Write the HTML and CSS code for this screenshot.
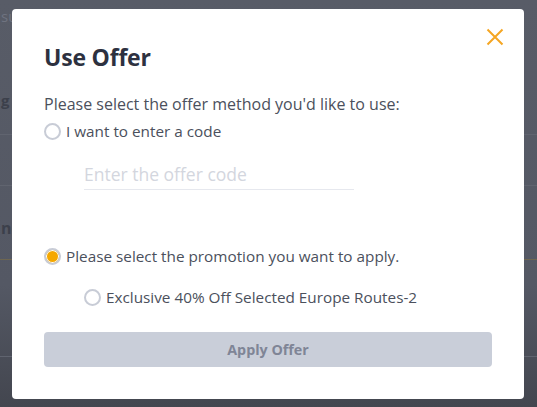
FILE: index.html
```html
<!DOCTYPE html>
<html lang="en">
<head>
<meta charset="utf-8">
<title>Use Offer</title>
<link rel="stylesheet" href="styles.css">
</head>
<body>
<div class="page">
  <div class="bg-text bg-top">su</div>
  <div class="bg-text bg-mid">g o</div>
  <div class="bg-line l1"></div>
  <div class="bg-line l2"></div>
  <div class="bg-text bg-bold">nc</div>
  <div class="bg-line bg-accent"></div>
  <div class="bg-line l4"></div>
</div>

<div class="modal" role="dialog" aria-labelledby="modal-title">
  <button class="close" aria-label="Close">
    <svg width="18" height="18" viewBox="0 0 18 18"><path d="M1.5 1.5 L16.5 16.5 M16.5 1.5 L1.5 16.5" stroke="#f5a623" stroke-width="2" fill="none"/></svg>
  </button>
  <h2 id="modal-title" class="title">Use Offer</h2>
  <p class="intro">Please select the offer method you'd like to use:</p>
  <label class="option">
    <span class="radio"></span>
    <span>I want to enter a code</span>
  </label>
  <div class="code-field">
    <input type="text" placeholder="Enter the offer code">
  </div>
  <label class="option option-promo">
    <span class="radio checked"></span>
    <span>Please select the promotion you want to apply.</span>
  </label>
  <label class="option sub-option">
    <span class="radio"></span>
    <span>Exclusive 40% Off Selected Europe Routes-2</span>
  </label>
  <button class="apply" disabled>Apply Offer</button>
</div>
</body>
</html>
```
FILE: styles.css
```css
* { box-sizing: border-box; }
html, body { margin: 0; padding: 0; }
body {
  width: 537px;
  height: 407px;
  overflow: hidden;
  background: linear-gradient(#585c67 0%, #545864 70%, #43464f 100%);
  font-family: "Open Sans", "Noto Sans", sans-serif;
  position: relative;
}
.page {
  display: flex;
  flex-direction: column;
  padding-top: 7px;
}
.bg-text {
  color: #3c404b;
  font-size: 15px;
  line-height: 18px;
  padding-left: 1px;
}
.bg-top { color: #6f7380; }
.bg-mid { margin-top: 66px; font-weight: 700; }
.bg-bold { margin-top: 33px; font-weight: 700; font-size: 16px; }
.bg-line { height: 1px; background: #60646f; width: 100%; }
.l1 { margin-top: 25px; }
.l2 { margin-top: 50px; }
.bg-accent { background: #6e6650; margin-top: 22px; }
.l4 { margin-top: 96px; }

.modal {
  position: absolute;
  left: 12px;
  top: 9px;
  width: 512px;
  height: 390px;
  background: #fff;
  border-radius: 4px;
  padding: 34px 32px 0 32px;
  display: flex;
  flex-direction: column;
  align-items: flex-start;
}
.close {
  position: absolute;
  right: 20px;
  top: 19px;
  width: 18px;
  height: 18px;
  padding: 0;
  border: 0;
  background: none;
  display: flex;
}
.title {
  margin: 0;
  font-size: 23px;
  line-height: 28px;
  font-weight: 700;
  color: #2d3140;
  letter-spacing: -0.2px;
}
.intro {
  margin: 22px 0 0 0;
  font-size: 16px;
  line-height: 22px;
  color: #4b505c;
}
.option {
  display: flex;
  align-items: center;
  gap: 5px;
  font-size: 15.3px;
  line-height: 22px;
  color: #4b505c;
  margin-top: 5px;
}
.radio {
  width: 17px;
  height: 17px;
  border-radius: 50%;
  border: 2px solid #c8ccd6;
  background: #fff;
  flex: none;
}
.radio.checked {
  background: #f5a800;
  box-shadow: inset 0 0 0 1px #fff;
}
.code-field {
  margin: 21px 0 0 40px;
  width: 270px;
  border-bottom: 1px solid #e6e8ee;
}
.code-field input {
  border: 0;
  outline: none;
  width: 100%;
  font-family: inherit;
  font-size: 17.5px;
  line-height: 22px;
  height: 26px;
  padding: 0 0 4px 0;
  color: #4b505c;
  background: transparent;
}
.code-field input::placeholder { color: #d3d6de; }
.option-promo { margin-top: 55px; }
.sub-option { margin: 19px 0 0 40px; }
.apply {
  margin-top: 24px;
  width: 448px;
  height: 35px;
  border: 0;
  border-radius: 4px;
  background: #c9ced9;
  color: #7f8596;
  font-family: inherit;
  font-size: 14.3px;
  font-weight: 700;
}
```
